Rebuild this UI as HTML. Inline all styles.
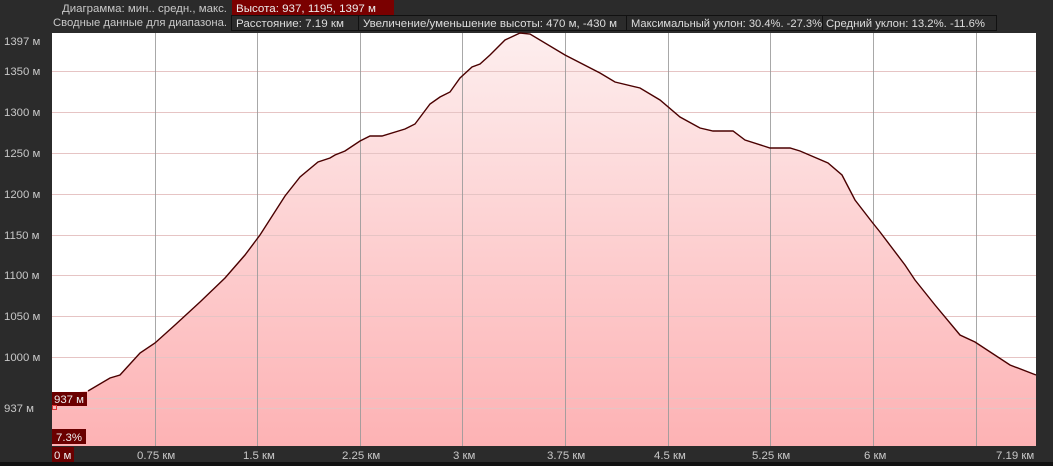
<!DOCTYPE html>
<html><head><meta charset="utf-8"><style>
body{margin:0;background:#2b2b2b;width:1053px;height:466px;overflow:hidden;font-family:"Liberation Sans",sans-serif;}
svg{display:block}
text{font-family:"Liberation Sans",sans-serif;font-size:11.4px}
</style></head><body>
<svg width="1053" height="466" viewBox="0 0 1053 466">
<defs><linearGradient id="g" gradientUnits="userSpaceOnUse" x1="0" y1="33" x2="0" y2="446">
<stop offset="0" stop-color="#fdeeee"/><stop offset="1" stop-color="#fdb2b4"/></linearGradient></defs>
<rect width="1053" height="466" fill="#2b2b2b"/>
<rect x="52" y="33" width="984" height="413" fill="#fff"/>
<path d="M52,395 L88,391 110,378 120,375 140,353 155,343 175,325 200,302 225,278 245,255 260,235 285,196 300,177 318,162 330,158 335,155 345,151 360,141 370,136 382,136 405,129 415,124 430,104 440,97 450,92 460,78 472,67 480,64 490,55 505,40 520,33 530,34 565,55 600,73 615,82 640,88 660,100 680,117 700,128 713,131 733,131 745,140 770,148 790,148 800,151 828,163 842,175 855,200 872,222 880,232 905,265 915,280 935,305 960,335 975,342 1010,365 1036,375 L1036,446 L52,446 Z" fill="url(#g)"/>
<g stroke="#e6c4c4" stroke-width="1">
<line x1="52" x2="1036" y1="71.5" y2="71.5"/><line x1="52" x2="1036" y1="112.5" y2="112.5"/><line x1="52" x2="1036" y1="153.5" y2="153.5"/><line x1="52" x2="1036" y1="194.5" y2="194.5"/><line x1="52" x2="1036" y1="235.5" y2="235.5"/><line x1="52" x2="1036" y1="275.5" y2="275.5"/><line x1="52" x2="1036" y1="316.5" y2="316.5"/><line x1="52" x2="1036" y1="357.5" y2="357.5"/><line x1="52" x2="1036" y1="398.5" y2="398.5"/><line x1="52" x2="1036" y1="408.5" y2="408.5"/>
</g>
<g stroke="#999" stroke-width="1" opacity="0.85">
<line y1="33" y2="446" x1="155.5" x2="155.5"/><line y1="33" y2="446" x1="257.5" x2="257.5"/><line y1="33" y2="446" x1="360.5" x2="360.5"/><line y1="33" y2="446" x1="462.5" x2="462.5"/><line y1="33" y2="446" x1="565.5" x2="565.5"/><line y1="33" y2="446" x1="668.5" x2="668.5"/><line y1="33" y2="446" x1="770.5" x2="770.5"/><line y1="33" y2="446" x1="873.5" x2="873.5"/><line y1="33" y2="446" x1="976.5" x2="976.5"/>
</g>
<polyline fill="none" stroke="#4a0000" stroke-width="1.4" points="88,391 110,378 120,375 140,353 155,343 175,325 200,302 225,278 245,255 260,235 285,196 300,177 318,162 330,158 335,155 345,151 360,141 370,136 382,136 405,129 415,124 430,104 440,97 450,92 460,78 472,67 480,64 490,55 505,40 520,33 530,34 565,55 600,73 615,82 640,88 660,100 680,117 700,128 713,131 733,131 745,140 770,148 790,148 800,151 828,163 842,175 855,200 872,222 880,232 905,265 915,280 935,305 960,335 975,342 1010,365 1036,375"/>
<rect x="0" y="462" width="1053" height="4" fill="#111"/>
<g fill="#c8c8c8">
<text x="4" y="45">1397 м</text><text x="4" y="75">1350 м</text><text x="4" y="116">1300 м</text><text x="4" y="157">1250 м</text><text x="4" y="198">1200 м</text><text x="4" y="239">1150 м</text><text x="4" y="279">1100 м</text><text x="4" y="320">1050 м</text><text x="4" y="361">1000 м</text><text x="4" y="412">937 м</text>
<text x="137" y="459">0.75 км</text><text x="243" y="459">1.5 км</text><text x="342" y="459">2.25 км</text><text x="453" y="459">3 км</text><text x="547" y="459">3.75 км</text><text x="654" y="459">4.5 км</text><text x="752" y="459">5.25 км</text><text x="864" y="459">6 км</text><text x="996" y="459">7.19 км</text>
<text x="62" y="12" textLength="165" lengthAdjust="spacingAndGlyphs">Диаграмма: мин.. средн., макс.</text>
<text x="53" y="26" textLength="174" lengthAdjust="spacingAndGlyphs">Сводные данные для диапазона.</text>
</g>
<rect x="232" y="0" width="162" height="15" fill="#7a0000"/>
<text x="236" y="12" fill="#eee" textLength="140" lengthAdjust="spacingAndGlyphs">Высота: 937, 1195, 1397 м</text>
<rect x="231.5" y="15.5" width="127" height="15" fill="#2b2b2b" stroke="#111"/>
<text x="236" y="27" fill="#ddd" textLength="108" lengthAdjust="spacingAndGlyphs">Расстояние: 7.19 км</text>
<rect x="358.5" y="15.5" width="268" height="15" fill="#2b2b2b" stroke="#111"/>
<text x="363" y="27" fill="#ddd" textLength="254" lengthAdjust="spacingAndGlyphs">Увеличение/уменьшение высоты: 470 м, -430 м</text>
<rect x="626.5" y="15.5" width="196" height="15" fill="#2b2b2b" stroke="#111"/>
<text x="631" y="27" fill="#ddd" textLength="191" lengthAdjust="spacingAndGlyphs">Максимальный уклон: 30.4%. -27.3%</text>
<rect x="822.5" y="15.5" width="174" height="15" fill="#2b2b2b" stroke="#111"/>
<text x="826" y="27" fill="#ddd" textLength="159" lengthAdjust="spacingAndGlyphs">Средний уклон: 13.2%. -11.6%</text>
<rect x="52" y="392" width="35" height="14" fill="#6a0000"/>
<text x="54" y="403" fill="#eee">937 м</text>
<rect x="52" y="429" width="34" height="15" fill="#6a0000"/>
<text x="56" y="441" fill="#eee">7.3%</text>
<rect x="52" y="447" width="22" height="15" fill="#6a0000"/>
<text x="54" y="459" fill="#eee">0 м</text>
<rect x="52.5" y="405.5" width="4" height="4" fill="none" stroke="#d33"/>
</svg>
</body></html>
